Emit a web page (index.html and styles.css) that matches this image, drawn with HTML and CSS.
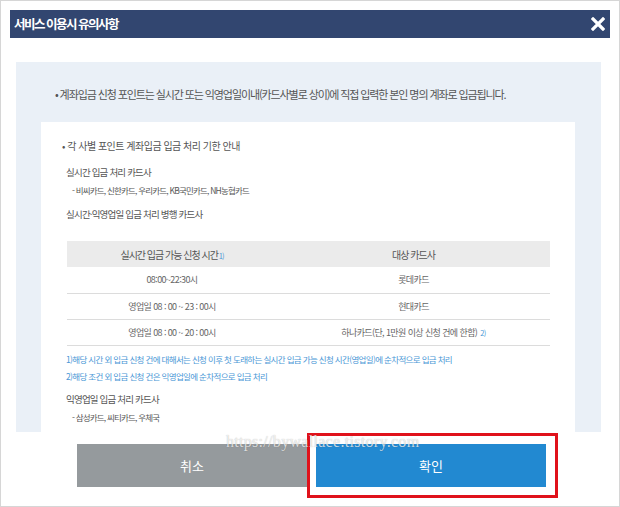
FILE: index.html
```html
<!DOCTYPE html>
<html lang="ko">
<head>
<meta charset="utf-8">
<title>서비스 이용시 유의사항</title>
<link rel="stylesheet" href="styles.css">
</head>
<body>
<div class="frame">
  <div class="header">
    <h1 class="title">서비스 이용시 유의사항</h1>
    <svg class="close" width="14" height="14" viewBox="0 0 14 14" aria-label="닫기">
      <path d="M2 2 L12 12 M12 2 L2 12" stroke="#fff" stroke-width="3.2" stroke-linecap="square"/>
    </svg>
  </div>
  <div class="panel">
    <p class="lead">• 계좌입금 신청 포인트는 실시간 또는 익영업일이내(카드사별로 상이)에 직접 입력한 본인 명의 계좌로 입금됩니다.</p>
    <div class="box">
      <p class="sub-lead">• 각 사별 포인트 계좌입금 입금 처리 기한 안내</p>
      <p class="group">실시간 입금 처리 카드사</p>
      <p class="list">- 비씨카드, 신한카드, 우리카드, KB국민카드, NH농협카드</p>
      <p class="group">실시간·익영업일 입금 처리 병행 카드사</p>
      <table class="tbl">
        <thead>
          <tr><th class="c1">실시간 입금 가능 신청 시간<span class="ref">1)</span></th><th>대상 카드사</th></tr>
        </thead>
        <tbody>
          <tr><td class="c1">08:00~22:30시</td><td>롯데카드</td></tr>
          <tr><td class="c1">영업일 08 : 00 ~ 23 : 00시</td><td>현대카드</td></tr>
          <tr><td class="c1">영업일 08 : 00 ~ 20 : 00시</td><td>하나카드(단, 1만원 이상 신청 건에 한함) <span class="ref">2)</span></td></tr>
        </tbody>
      </table>
      <p class="note first">1)해당 시간 외 입금 신청 건에 대해서는 신청 이후 첫 도래하는 실시간 입금 가능 신청 시간(영업일)에 순차적으로 입금 처리</p>
      <p class="note">2)해당 조건 외 입금 신청 건은 익영업일에 순차적으로 입금 처리</p>
      <p class="group next">익영업일 입금 처리 카드사</p>
      <p class="list">- 삼성카드, 씨티카드, 우체국</p>
      <p class="group">&nbsp;</p>
    </div>
  </div>
  <div class="footer">
    <button class="btn cancel">취소</button>
    <button class="btn ok">확인</button>
  </div>
  <div class="highlight"></div>
  <div class="watermark">https://bywallace.tistory.com</div>
</div>
</body>
</html>
```
FILE: styles.css
```css
* { box-sizing: border-box; }
html, body { margin: 0; padding: 0; background: #fff; }
body { font-family: "Noto Sans CJK KR", "Noto Sans", sans-serif; color: #555; }
p { margin: 0; }

.frame {
  position: relative;
  width: 620px;
  height: 507px;
  border: 1px solid #d6d6d6;
  padding: 9px 9px 0 9px;
  overflow: hidden;
}

.header {
  height: 28px;
  background: #324670;
  display: flex;
  align-items: center;
  justify-content: space-between;
  padding: 0 5px 0 4px;
}
.title {
  margin: 0;
  font-size: 12.5px;
  font-weight: 700;
  color: #fff;
  letter-spacing: -1.5px;
  line-height: 1;
}
.close { display: block; }

.panel {
  margin: 24px 0 0 6px;
  width: 585px;
  height: 370px;
  background: #eaf0f7;
  padding: 23px 26px 0 25px;
  overflow: hidden;
}
.lead {
  font-size: 11px;
  line-height: 18px;
  letter-spacing: -1.1px;
  color: #555;
  padding-left: 14px;
  margin-bottom: 19px;
}

.box {
  background: #fff;
  padding: 15px 26px 0 21px;
  font-size: 10px;
  letter-spacing: -0.5px;
}
.sub-lead { line-height: 18px; margin-bottom: 8px; }
.group { line-height: 18px; padding-left: 4px; font-size: 9.5px; letter-spacing: -0.8px; }
.list { line-height: 18px; padding-left: 10px; font-size: 8.5px; letter-spacing: -0.8px; margin-bottom: 6px; }
.group.next { margin-top: 5px; }

.tbl {
  width: 483px;
  margin: 18px 0 0 5px;
  border-collapse: collapse;
  font-size: 9px;
  letter-spacing: -0.6px;
}
.tbl th {
  background: #ebebeb;
  font-weight: 400;
  height: 26px;
  padding: 0;
  color: #555;
  font-size: 10px;
  letter-spacing: -1px;
}
.tbl td {
  height: 26px;
  padding: 0;
  text-align: center;
  border-bottom: 1px solid #dcdcdc;
  color: #666;
}
.tbl .c1 { width: 210px; }
.ref { color: #4a97d6; font-size: 7.5px; margin-left: 1px; }

.note {
  color: #4a97d6;
  font-size: 8.5px;
  line-height: 17px;
  padding-left: 4px;
  letter-spacing: -0.65px;
}
.note.first { margin-top: 5px; }

.footer {
  display: flex;
  gap: 9px;
  padding: 12px 0 0 67px;
}
.btn {
  width: 230px;
  height: 43px;
  border: none;
  color: #fff;
  font-family: inherit;
  font-size: 13px;
  padding: 0;
}
.cancel { background: #959a9d; }
.ok { background: #2289d1; }

.highlight {
  position: absolute;
  left: 306px;
  top: 432px;
  width: 251px;
  height: 65px;
  border: 3px solid #e0121b;
}
.watermark {
  position: absolute;
  left: 225px;
  top: 432px;
  font-family: "Liberation Serif", "DejaVu Serif", serif;
  font-size: 16px;
  color: rgba(255,255,255,0.75);
  text-shadow: 0 0 1px rgba(0,0,0,0.3);
  letter-spacing: 0.3px;
}
```
